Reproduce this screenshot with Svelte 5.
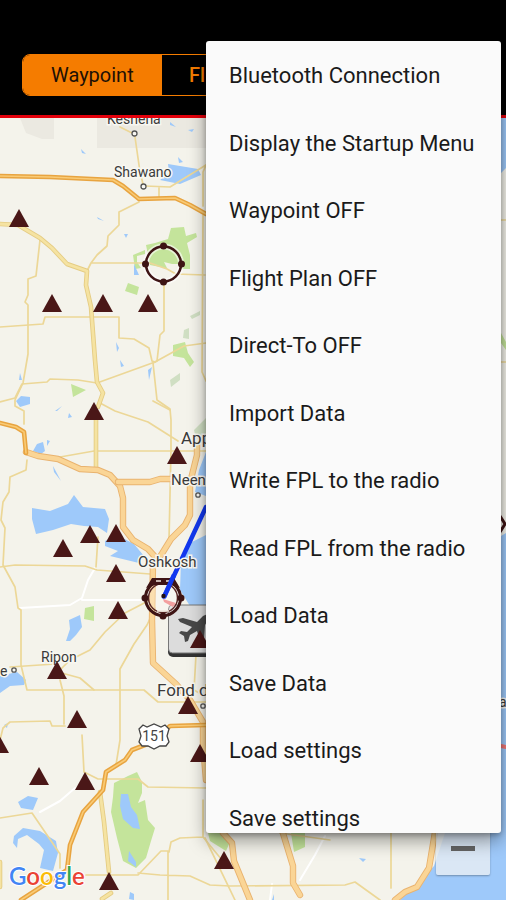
<script>
  const menuItems = [
    'Bluetooth Connection',
    'Display the Startup Menu',
    'Waypoint OFF',
    'Flight Plan OFF',
    'Direct-To OFF',
    'Import Data',
    'Write FPL to the radio',
    'Read FPL from the radio',
    'Load Data',
    'Save Data',
    'Load settings',
    'Save settings'
  ];

  // Minor roads
  const roads = [
    'M120 127L134 134M135 137L140 172L143 184M145 186L170 187L206 165M159 187V198M206 165L203 172V206',
    'M139 202L119 212V225L108 236L107 246L97 255L91 263L87 271M91 263H150L167 269L176 274L205 275',
    'M40 240L36 276L28 279V295L25 302L28 305V354L23 383L15 400V406L24 411V424',
    'M0 327L43 324L45 317H119V338L134 339L149 348L152 361L155 362L184 346L206 343',
    'M164 284V331L160 335L157 361L153 363L157 400L170 409L171 420V450L169 540',
    'M0 402L15 398L22 384L47 382L50 379L78 380L97 383L155 362M203 215L202 372L206 381',
    'M100 403L115 411L148 422L178 441M153 401L170 410',
    'M60 457L94 451H206M27 460L26 470L10 477L9 492L3 502L1 520L5 528L3 565L15 587L18 608L21 610V665L27 690H144L158 702H206',
    'M0 567L15 565L85 566L97 570L150 574M98 537L96 567',
    'M150 600L125 613L105 632L90 650L70 660L58 672L80 678L94 690M10 667L55 664',
    'M155 608L147 625L134 644L120 669V740L116 765M60 680L64 696V724',
    'M0 740L3 728L10 722L50 721L52 726H65M82 735L84 772L98 779H138L148 787L206 788',
    'M0 818L32 813L60 854V868M86 875H138L161 851H168V900M169 852L171 842L180 838L203 837L222 860M203 837V800M138 873L160 875L190 876L210 885L230 886L345 885L355 882L380 900',
    'M196 655L194 690L206 697M205 838L206 840L235 900M391 830V888M280 833L330 840M501 220H506M501 362H506'
  ];

  // Wider county roads
  const wideRoads = [
    'M0 224L18 225L40 238L52 248L67 264L87 271L86 285L91 307L95 360L97 382L103 393L98 407',
    'M96 418V470',
    'M100 792L104 822L109 872M0 862V887M102 899L111 893'
  ];

  // Major highways
  const highways = [
    'M26 452L38 456L58 459L80 469L98 470L110 475L120 486L123 498V527L133 540L148 549L158 560L171 539L185 525L190 515V483L197 455V445',
    'M118 482L150 482L160 479L172 479',
    'M153 563L152 620L153 663L176 684L190 700L203 722V745L206 780',
    'M223 833L232 843L234 861L250 900M282 830L293 866V883L300 895M435 832L429 868L417 887L405 892L395 900'
  ];

  // Divided routes with an amber line
  const amberRoads = [
    'M0 176L50 177L113 180L123 186L139 199L175 198L190 205L206 214',
    'M0 423L16 427L24 432L26 453',
    'M206 725L170 726L150 743L132 750L125 760L106 772L103 790L83 812L70 845L67 870L21 900'
  ];

  const water = [
    'M168 164L198 169L201 175L180 184L160 180L169 173Z',
    'M178 157L183 162L179 163ZM170 122L176 127L170 125ZM188 130L194 129L192 132ZM81 149L86 154L82 153Z',
    'M97 217L104 221L98 219ZM124 234L128 234L126 238ZM134 264L139 275L134 275Z',
    'M16 401L21 396L30 397L30 404L20 407ZM116 342L119 348L117 352ZM120 360L124 366L121 367ZM148 370L152 367L149 380ZM20 373L22 380H19ZM55 411L62 406L57 411ZM69 413L72 417L68 418Z',
    'M33 451L37 444L43 442L45 451L41 454ZM47 440L50 441L47 446ZM53 466L61 481L54 472Z',
    'M32 508L50 511L68 504L74 495L83 507L105 509L109 519L107 533L98 527L84 526L71 524L53 530L36 534L32 519Z',
    'M105 541L117 535L134 544L144 556L139 563L110 556L118 551L105 546Z',
    'M69 620L80 615L82 627L76 635L70 641L66 641L70 629Z',
    'M0 676L17 672L26 680L24 685L10 686L0 693Z',
    'M18 802L28 796L38 798L33 810L21 808ZM4 725L8 723L7 728Z',
    'M13 843L14 836L23 828L40 831L56 841L58 853L53 871L40 868L44 850L39 844L27 835L18 839L17 848Z',
    'M206 452L199 470L195 492L206 496ZM206 535L190 543L181 560L180 590L190 606H206Z',
    'M129 899L130 892L134 894V900ZM359 858L366 859L363 862ZM272 900L274 894V900Z'
  ];

  const parks = [
    'M168 239L171 228L184 227L186 236L196 233L197 237L187 243L190 255V269H170L150 265L146 245L155 243Z',
    'M133 255L145 250V254L137 256V262L141 268L135 269ZM128 283L139 287L137 295L125 291Z',
    'M173 345L185 342L188 353L194 362L190 367L184 358L173 356ZM71 384L86 390L73 397Z',
    'M85 608L94 606V621L84 619Z',
    'M114 783L128 776L137 772L142 782V793L138 803L145 800L148 820L155 828L151 841L146 858L136 868L123 861L117 838L111 812L113 797Z',
    'M208 833H222L230 842L226 851L210 841ZM291 833H305V847L294 852ZM501 333L506 342V350L501 343Z'
  ];

  const triangles = [
    [19, 219], [52, 304], [103, 304], [148, 304], [94, 412], [177, 456], [90, 535],
    [116, 534], [63, 549], [116, 574], [118, 611], [57, 671], [188, 706], [77, 720],
    [-1, 745], [39, 777], [85, 782], [200, 754], [109, 882], [224, 861], [200, 640]
  ];
</script>

<div class="screen">
  <header>
    <div class="tabs">
      <button class="tab active">Waypoint</button>
      <button class="tab">Flight Plan</button>
    </div>
  </header>

  <main>
    <svg class="map" viewBox="0 118 506 782" preserveAspectRatio="xMinYMin slice" role="img" aria-label="Waypoint map">
      <rect x="0" y="118" width="506" height="782" fill="#f4f3eb" />
      <path d="M97 118H206V148H97ZM20 118L26 133L42 139H54V118Z" fill="#ebe9e1" />
      <path d="M501 118H506V168L501 173ZM501 536L506 533V900H400L425 876L434 866L445 833L501 800Z" fill="#9ec9fa" />
      {#each parks as d}<path {d} fill="#c4e49b" />{/each}
      <path d="M190 316L200 311V315L192 319ZM184 330L189 328V339L183 338ZM170 380L180 373V380L171 387ZM194 430L206 418V441L196 438Z" fill="#d0dfc3" />
      {#each water as d}<path {d} fill="#9ec9fa" />{/each}
      <path d="M121 794L128 794L131 807L137 815L140 829L133 828L123 819L120 806ZM129 851L136 862V867L128 861Z" fill="#9ec9fa" />
      <path d="M164 262L172 264H180V272L168 270Z" fill="#f4f3eb" />

      <g fill="none" stroke-linejoin="round" stroke-linecap="round">
        <path d="M20 608L70 605L82 598L88 580L95 568M82 600L145 600M40 812L60 801L75 788M325 836L315 855L300 880M272 884L270 900" stroke="#fff" stroke-width="2" />
        {#each roads as d}<path {d} stroke="#ecd797" stroke-width="1.7" />{/each}
        {#each wideRoads as d}
          <path {d} stroke="#e5cc83" stroke-width="4.6" />
          <path {d} stroke="#f5e3a2" stroke-width="2.8" />
        {/each}
        {#each highways as d}
          <path {d} stroke="#e9b36f" stroke-width="6.4" />
          <path {d} stroke="#fad596" stroke-width="4.6" />
        {/each}
        {#each amberRoads as d}
          <path {d} stroke="#e8a440" stroke-width="4.6" />
          <path {d} stroke="#f9cb76" stroke-width="1.6" />
        {/each}
        <path d="M206 507L164 597" stroke="#1238ee" stroke-width="4.5" />
        <path d="M501 746L506 747" stroke="#f07878" stroke-width="4" />
      </g>

      <g fill="#f8f7f2" stroke="#555" stroke-width="1.3">
        <circle cx="134.5" cy="133.5" r="2.5" />
        <circle cx="143.5" cy="186.5" r="2.5" />
        <circle cx="14" cy="670" r="2.2" />
        <circle cx="198" cy="495" r="2.2" />
        <circle cx="203" cy="706" r="2.2" />
      </g>

      <g class="labels">
        <text x="107" y="124">Keshena</text>
        <text x="114" y="177">Shawano</text>
        <text x="181" y="444" class="large">Appleton</text>
        <text x="171" y="485" class="city">Neenah</text>
        <text x="138" y="567" class="city">Oshkosh</text>
        <text x="41" y="662">Ripon</text>
        <text x="0" y="676">e</text>
        <text x="157" y="696" class="large">Fond du Lac</text>
        <text x="499" y="707">a</text>
      </g>

      <path d="M143 725L147 727L154 724L161 727L165 725L169 729L167 736L169 742L166 746H160L154 749L148 746H142L139 742L141 736L139 729Z" fill="#fff" stroke="#444" stroke-width="1.3" />
      <text class="route" x="154" y="741" text-anchor="middle">151</text>

      <rect x="168" y="607" width="60" height="50" rx="5" fill="#333" />
      <rect x="168.5" y="605" width="60" height="48" rx="4" fill="#dcdcdc" stroke="#777" />
      <path d="M178 619L183 618L197 622L203 616L212 612L208 620L205 625L204 640L200 641L197 631L190 635L188 641L185 642L184 636L179 633L181 631L187 632L192 627L180 622Z" fill="#484848" />

      <g fill="#4a1717">
        {#each triangles as [x, y]}<path d="M{x} {y - 10}L{x + 10} {y + 8}H{x - 10}Z" />{/each}
      </g>

      <circle cx="163.5" cy="264" r="17.5" fill="none" stroke="#fff" stroke-width="6" stroke-opacity=".6" />
      <circle cx="163.5" cy="264" r="17.5" fill="none" stroke="#3e1414" stroke-width="2.5" />
      <circle cx="163" cy="598" r="17.5" fill="#fff" fill-opacity=".25" stroke="#3e1414" stroke-width="3" />
      <circle cx="163" cy="598" r="14.5" fill="none" stroke="#5a2927" stroke-width="1.5" />
      <g fill="#3e1414">
        <circle cx="163.5" cy="246" r="3.5" />
        <circle cx="163.5" cy="282" r="3.5" />
        <circle cx="145.5" cy="264" r="3.5" />
        <circle cx="181.5" cy="264" r="3.5" />
        <path d="M152 578H174L180 588L171 585H155L146 588Z" />
        <circle cx="163" cy="616" r="3.5" />
        <circle cx="145" cy="598" r="3.5" />
        <circle cx="181" cy="598" r="3.5" />
      </g>
      <path d="M156 581H161M166 581H171M157 611H169" stroke="#f2e8dd" stroke-width="1.5" />
      <path d="M163 599L176 603L173 607L164 602Z" fill="#f3a0a0" />
      <path d="M174 575L164 597" stroke="#1238ee" stroke-width="4.5" />
      <circle cx="163.5" cy="596" r="2.2" fill="#211" />
      <path d="M500 516L505 524L500 532" fill="none" stroke="#3e1414" stroke-width="3" />

      <text class="google" x="9" y="885"><tspan fill="#4285f4">G</tspan><tspan fill="#ea4335">o</tspan><tspan fill="#fbbc05">o</tspan><tspan fill="#4285f4">g</tspan><tspan fill="#34a853">l</tspan><tspan fill="#ea4335">e</tspan></text>
    </svg>
    <button class="zoom-out" aria-label="Zoom out"></button>
  </main>

  <nav class="menu" aria-label="Options">
    <ul>
      {#each menuItems as item}
        <li><button>{item}</button></li>
      {/each}
    </ul>
  </nav>
</div>

<style>
  :global(body) {
    margin: 0;
    background: #000;
  }

  button {
    margin: 0;
    padding: 0;
    border: 0;
    background: none;
    color: inherit;
    font: inherit;
    cursor: pointer;
  }

  .screen {
    position: relative;
    display: flex;
    flex-direction: column;
    height: 100vh;
    overflow: hidden;
    font-family: Roboto, 'Noto Sans', sans-serif;
  }

  header {
    padding: 54px 22px 19px;
    border-bottom: 3px solid #e3000b;
    background: #000;
  }

  .tabs {
    display: grid;
    grid-template-columns: 139px 1fr;
    height: 42px;
    box-sizing: border-box;
    border: 1px solid #f57c00;
    border-radius: 8px;
    overflow: hidden;
    font-size: 20px;
  }

  .tab {
    padding: 0 27px;
    text-align: left;
    color: #f57c00;
    font-weight: 500;
  }

  .tab.active {
    padding: 0 28px;
    background: #f57c00;
    color: #1d1005;
    font-weight: 400;
  }

  main {
    position: relative;
    flex: 1;
    min-height: 0;
  }

  .map {
    display: block;
    width: 100%;
    height: 100%;
  }

  .labels text {
    fill: #3a3a3a;
    stroke: #f8f7f1;
    stroke-width: 3px;
    paint-order: stroke;
    font-size: 14px;
  }

  .labels .city {
    font-size: 15px;
  }

  .labels .large {
    font-size: 17px;
  }

  .route {
    fill: #444;
    font-size: 14px;
  }

  .google {
    font-family: Lato, sans-serif;
    font-size: 24px;
    font-weight: 600;
    stroke: #fff;
    stroke-width: 2px;
    paint-order: stroke;
  }

  .zoom-out {
    position: absolute;
    right: 16px;
    bottom: 25px;
    display: grid;
    place-items: center;
    width: 54px;
    height: 54px;
    border-radius: 2px;
    background: rgb(232 239 244 / 80%);
    box-shadow: 0 1px 2px rgb(0 0 0 / 30%);
  }

  .zoom-out::before {
    content: '';
    width: 24px;
    height: 5px;
    background: #646464;
  }

  .menu {
    position: absolute;
    top: 41px;
    right: 5px;
    bottom: 67px;
    width: 295px;
    border-radius: 3px;
    background: #fafafa;
    box-shadow: 0 8px 18px rgb(0 0 0 / 38%), 0 2px 5px rgb(0 0 0 / 25%);
    overflow: hidden;
  }

  .menu ul {
    display: grid;
    grid-auto-rows: 1fr;
    height: 810px;
    margin: 0;
    padding: 1px 0 0;
    list-style: none;
  }

  .menu button {
    width: 100%;
    height: 100%;
    padding: 0 23px;
    color: #1a1a1a;
    font-size: 22px;
    text-align: left;
    white-space: nowrap;
  }
</style>
